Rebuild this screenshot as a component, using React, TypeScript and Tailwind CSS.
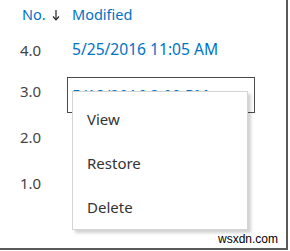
import React from "react";

export default function App() {
  const font = { fontFamily: '"Noto Sans", "Open Sans", sans-serif' };
  return (
    <div className="relative h-[251px] w-[290px] bg-white overflow-hidden">
      <div
        className="relative h-[250px] w-[288px] border-r-2 border-b-2 border-[#5a5a5a] bg-white"
        style={font}
      >
        {/* header */}
        <div className="flex h-[30px] items-center text-[14.5px] text-[#0072c6]">
          <div className="flex w-[72px] items-center pl-[22px]">
            <span>No.</span>
            <svg width="8" height="12" viewBox="0 0 8 12" className="ml-[6px]">
              <path d="M4 1 V10.5" stroke="#222" strokeWidth="1.2" fill="none" />
              <path d="M1 7.5 L4 10.8 L7 7.5" stroke="#222" strokeWidth="1.2" fill="none" />
            </svg>
          </div>
          <span>Modified</span>
        </div>

        {/* row 4.0 */}
        <div className="flex h-[40px] items-center text-[15px]">
          <div className="w-[72px] pl-[20px] text-[#444]">4.0</div>
          <div className="text-[15.6px] text-[#0072c6]">5/25/2016 11:05 AM</div>
        </div>

        {/* row 3.0 */}
        <div className="flex h-[44px] items-start text-[15px]">
          <div className="w-[67px] pl-[20px] pt-[10px] text-[#444]">3.0</div>
          <div className="mt-[7px] h-[36px] w-[188px] overflow-hidden border border-[#4a4a4a] pl-[4px] pt-[8px] text-[15.6px] leading-[20px] text-[#0072c6]">
            5/18/2016 3:09 PM
          </div>
        </div>

        {/* row 2.0 */}
        <div className="flex h-[46px] items-center text-[15px]">
          <div className="w-[72px] pl-[20px] text-[#444]">2.0</div>
        </div>

        {/* row 1.0 */}
        <div className="flex h-[46px] items-center text-[15px]">
          <div className="w-[72px] pl-[20px] text-[#444]">1.0</div>
        </div>

        {/* context menu */}
        <div className="absolute left-[72px] top-[91px] flex h-[139px] w-[176px] flex-col border border-[#d4d4d4] bg-white pt-[5px] text-[15px] text-[#333] shadow-[3px_3px_3px_rgba(0,0,0,0.18)]">
          <div className="flex h-[44px] items-center pl-[14px]">View</div>
          <div className="flex h-[44px] items-center pl-[14px]">Restore</div>
          <div className="flex h-[44px] items-center pl-[14px]">Delete</div>
        </div>

        {/* watermark */}
        <div
          className="absolute right-[8px] bottom-[2px] text-[12px] leading-[13px] text-black"
          style={{ fontFamily: '"Liberation Sans", Arial, sans-serif' }}
        >
          wsxdn.com
        </div>
      </div>
    </div>
  );
}
